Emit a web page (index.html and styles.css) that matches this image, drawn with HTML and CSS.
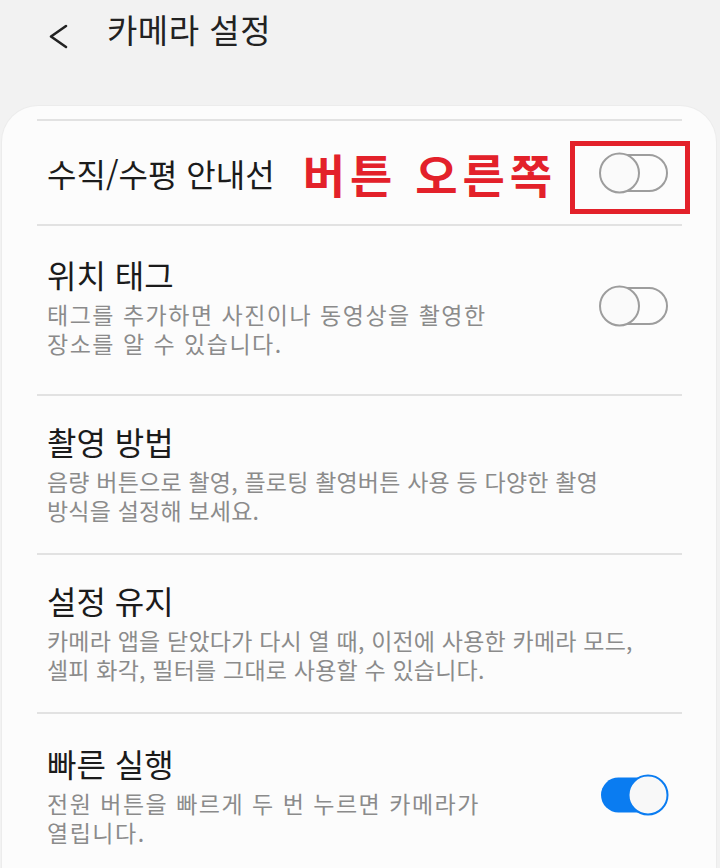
FILE: index.html
```html
<!DOCTYPE html>
<html lang="ko">
<head>
<meta charset="utf-8">
<title>카메라 설정</title>
<link rel="stylesheet" href="styles.css">
</head>
<body>
<header class="appbar">
  <svg class="back" width="22" height="26" viewBox="0 0 22 26" aria-hidden="true">
    <polyline points="18,2 3,12.5 18,23" fill="none" stroke="#222" stroke-width="2.6" stroke-linecap="round" stroke-linejoin="round"/>
  </svg>
  <h1 class="appbar-title">카메라 설정</h1>
</header>
<main class="card">
  <ul class="list">
    <li class="row row-single">
      <span class="title">수직/수평 안내선</span>
      <span class="note">버튼 오른쪽</span>
      <span class="switch-wrap">
        <svg class="switch" width="70" height="42" viewBox="0 0 70 42" aria-hidden="true">
          <rect x="2" y="3" width="66" height="36" rx="18" fill="none" stroke="#9d9d9d" stroke-width="2"/>
          <circle cx="20.5" cy="21" r="19.5" fill="#fafafa" stroke="#9d9d9d" stroke-width="2"/>
        </svg>
        <span class="mark"></span>
      </span>
    </li>
    <li class="row row-tall">
      <div class="text">
        <div class="title">위치 태그</div>
        <div class="sub sub-wide">
          <div class="line">태그를 추가하면 사진이나 동영상을 촬영한</div>
          <div class="line">장소를 알 수 있습니다.</div>
        </div>
      </div>
      <svg class="switch" width="70" height="42" viewBox="0 0 70 42" aria-hidden="true">
        <rect x="2" y="3" width="66" height="36" rx="18" fill="none" stroke="#9d9d9d" stroke-width="2"/>
        <circle cx="20.5" cy="21" r="19.5" fill="#fafafa" stroke="#9d9d9d" stroke-width="2"/>
      </svg>
    </li>
    <li class="row">
      <div class="text">
        <div class="title">촬영 방법</div>
        <div class="sub">
          <div class="line">음량 버튼으로 촬영, 플로팅 촬영버튼 사용 등 다양한 촬영</div>
          <div class="line">방식을 설정해 보세요.</div>
        </div>
      </div>
    </li>
    <li class="row">
      <div class="text">
        <div class="title">설정 유지</div>
        <div class="sub">
          <div class="line">카메라 앱을 닫았다가 다시 열 때, 이전에 사용한 카메라 모드,</div>
          <div class="line">셀피 화각, 필터를 그대로 사용할 수 있습니다.</div>
        </div>
      </div>
    </li>
    <li class="row row-last">
      <div class="text">
        <div class="title">빠른 실행</div>
        <div class="sub sub-wide">
          <div class="line">전원 버튼을 빠르게 두 번 누르면 카메라가</div>
          <div class="line">열립니다.</div>
        </div>
      </div>
      <svg class="switch" width="70" height="42" viewBox="0 0 70 42" aria-hidden="true">
        <rect x="2" y="3.5" width="64" height="35" rx="17.5" fill="#0a7cf1"/>
        <circle cx="49" cy="21" r="19.5" fill="#f8f8f8" stroke="#0a7cf1" stroke-width="2"/>
      </svg>
    </li>
  </ul>
</main>
</body>
</html>
```

FILE: styles.css
```css
* { box-sizing: border-box; }
html, body { margin: 0; padding: 0; }
body {
  background: #f2f2f2;
  font-family: "Noto Sans CJK KR", "Noto Sans", sans-serif;
  color: #1b1b1b;
  width: 720px;
  height: 868px;
  overflow: hidden;
}
.appbar {
  height: 106px;
  display: flex;
  align-items: flex-start;
  padding: 8px 0 0 48px;
}
.back {
  margin-top: 16px;
  flex: none;
}
.appbar-title {
  margin: 0 0 0 37px;
  font-size: 33px;
  line-height: 42px;
  font-weight: 400;
  letter-spacing: 0.5px;
  color: #222;
}
.card {
  margin: 0 4px 0 2px;
  background: #fcfcfc;
  border-radius: 36px 36px 0 0;
  padding-top: 13px;
  min-height: 762px;
  box-shadow: 0 0 0 1px #ececec;
}
.list {
  list-style: none;
  margin: 0 34px 0 35px;
  padding: 0;
}
.row {
  display: flex;
  align-items: center;
  border-top: 2px solid #e2e2e2;
  padding: 25px 13px 28px 10px;
}
.row-single {
  height: 105px;
  padding-top: 0;
  padding-bottom: 0;
}
.row-tall { padding-top: 28px; padding-bottom: 36px; }
.row-last { padding-top: 29px; }
.text { flex: 1; }
.title {
  font-size: 32px;
  line-height: 40px;
  color: #1b1b1b;
}
.sub {
  margin-top: 6px;
  font-size: 23px;
  letter-spacing: 0.2px;
  color: #8b8b8b;
}
.sub .line {
  height: 29px;
  line-height: 29px;
  white-space: nowrap;
}
.sub-wide { letter-spacing: 1.5px; }
.note {
  margin-left: 28px;
  font-size: 46px;
  line-height: 52px;
  font-weight: 700;
  letter-spacing: 5px;
  color: #e3212a;
}
.switch-wrap {
  margin-left: auto;
  position: relative;
  display: flex;
}
.switch { flex: none; display: block; }
.mark {
  position: absolute;
  left: -29px;
  right: -21px;
  top: -11px;
  bottom: -20px;
  border: 5px solid #e3212a;
}
```
